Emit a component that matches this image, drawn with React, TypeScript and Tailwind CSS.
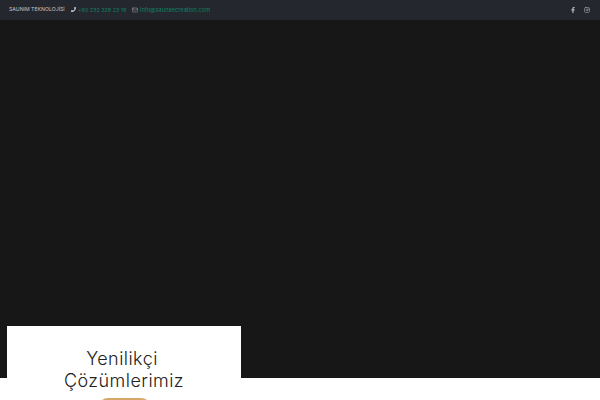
import { Mail, Instagram } from 'lucide-react';
import { FaFacebookF, FaPhone } from 'react-icons/fa';

export default function App() {
  return (
    <div className="h-[400px] overflow-hidden bg-white font-['Inter',sans-serif]">
      <header className="h-5 bg-[#25272f] flex items-center justify-between pl-[9px] pr-[10px] text-[5.4px]">
        <div className="flex items-center">
          <span className="w-[56px] whitespace-nowrap text-[#c4c5c8] text-[5.2px]">SAUNIM TEKNOLOJİSİ</span>
          <FaPhone size={5} className="ml-[6px] text-[#d5d6d8]" />
          <span className="ml-[2px] w-[49px] whitespace-nowrap text-[#0f7f63]">+90 232 328 23 18</span>
          <Mail size={6} className="ml-[5px] text-[#a5a7ab]" />
          <span className="ml-[2px] whitespace-nowrap text-[#0f7f63] text-[5.7px]">info@saunaecreation.com</span>
        </div>
        <div className="flex items-center gap-[8px] text-[#b9babd]">
          <FaFacebookF size={6} />
          <Instagram size={6} />
        </div>
      </header>
      <div className="h-[358px] bg-[#171717]" />
      <section className="relative -mt-[52px] ml-[7px] w-[234px] h-[80px] bg-white pt-[22px] text-center">
        <h2 className="text-[18px] leading-[22px] font-light tracking-[0.45px] text-[#222222]">
          <span className="inline-block pr-[4px]">Yenilikçi</span>
          <br />
          Çözümlerimiz
        </h2>
        <div className="mx-auto mt-[6px] w-[53px] h-5 rounded-full bg-[#d6a868]" />
      </section>
    </div>
  );
}
